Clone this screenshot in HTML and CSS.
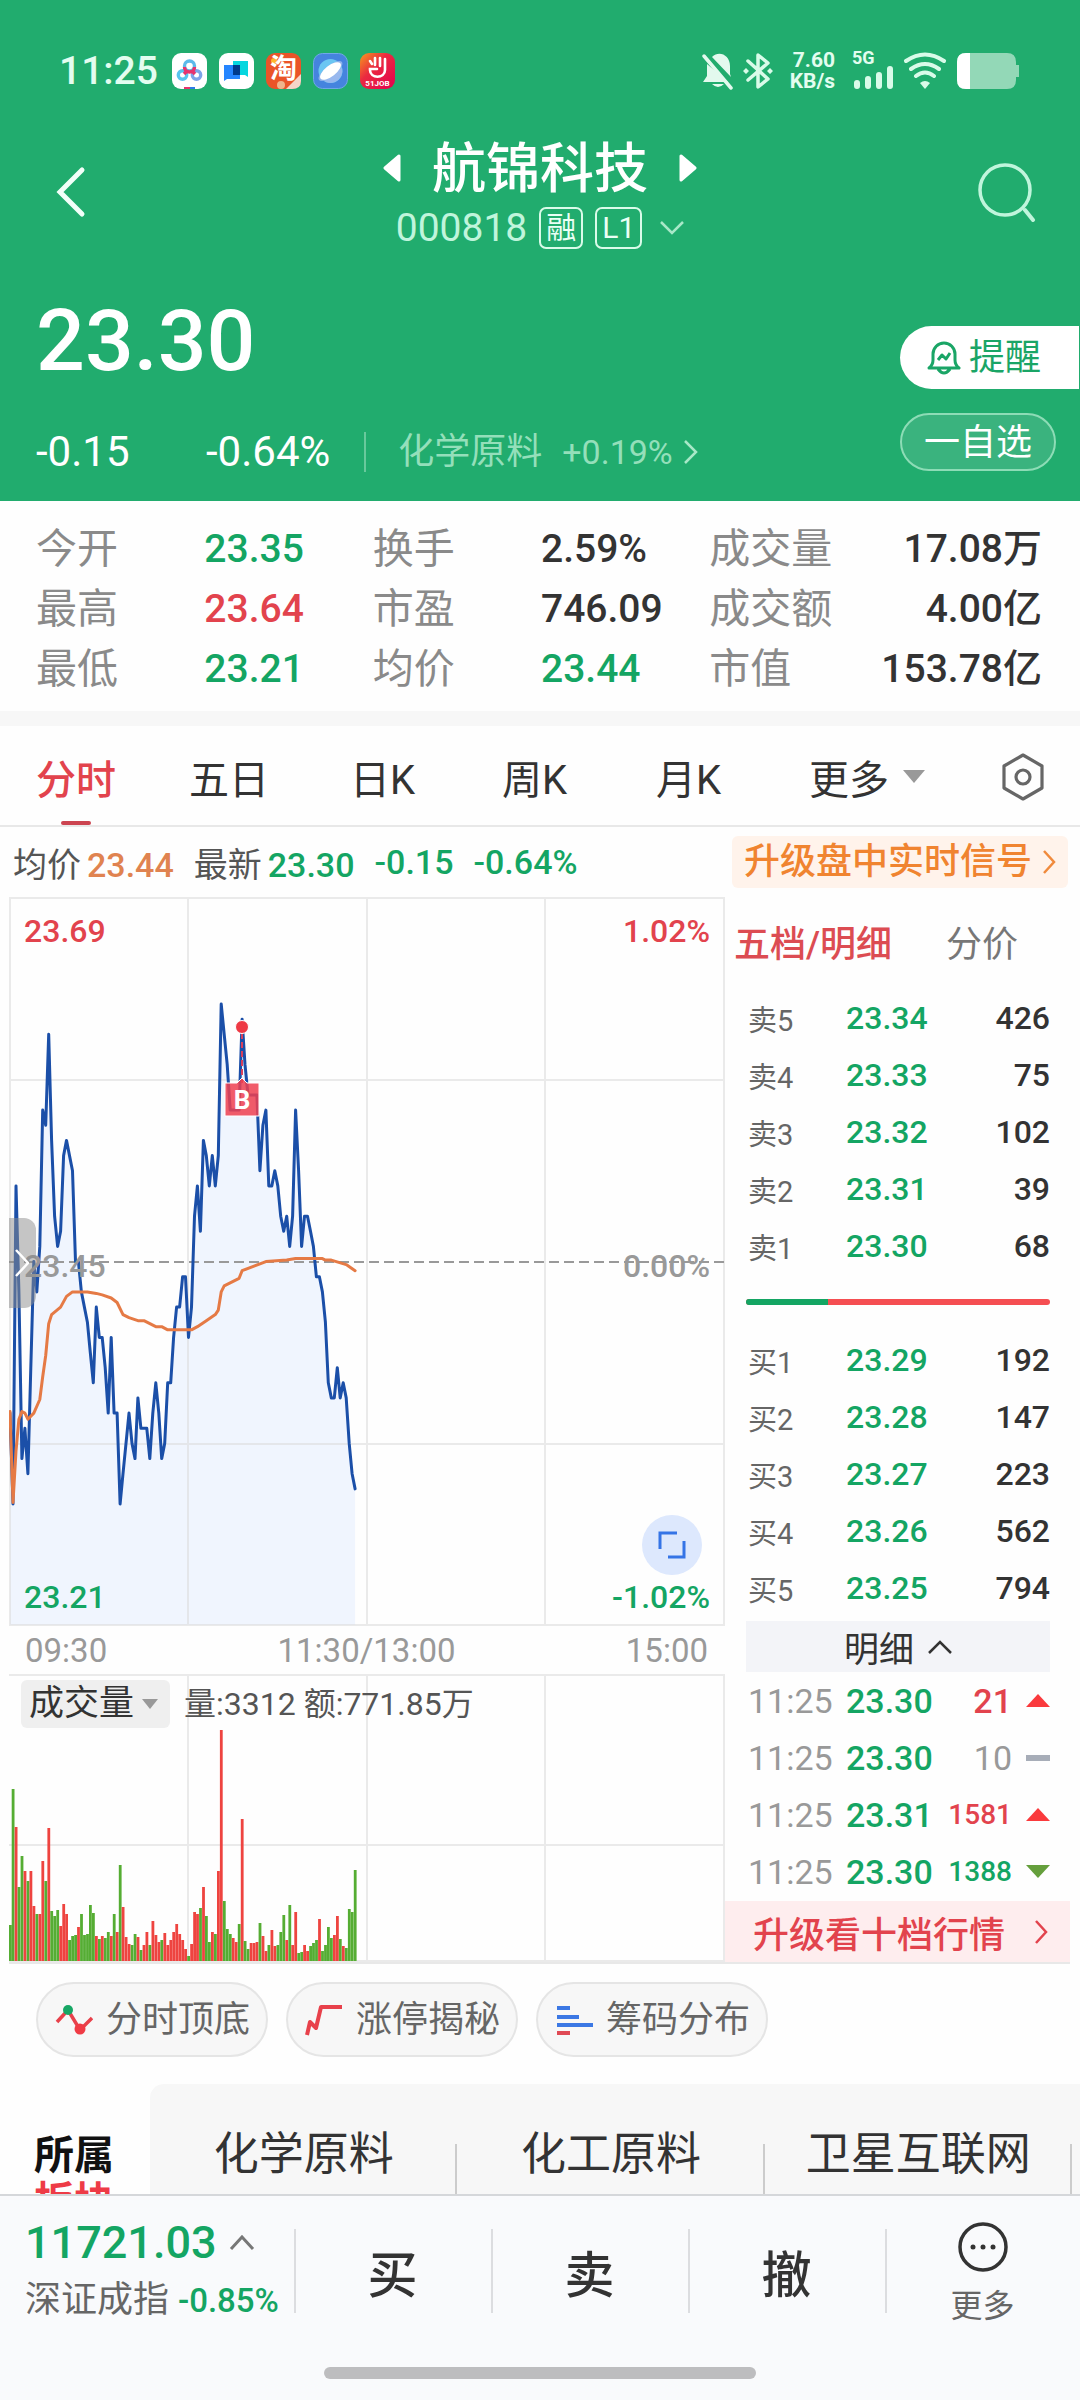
FILE: index.html
```html
<!DOCTYPE html>
<html lang="zh-CN">
<head>
  <meta charset="UTF-8">
  <meta name="viewport" content="width=device-width, initial-scale=1">
  <title>航锦科技 000818</title>
  <link rel="stylesheet" href="styles.css">
</head>
<body>
  <header class="header">
    <div class="status-bar">
      <span class="clock">11:25</span>
      <div class="apps">
        <svg class="app-icon" viewBox="0 0 35 36">
          <rect width="35" height="36" rx="9" fill="#fff"/>
          <g fill="none" stroke-width="3.4">
            <circle cx="10.500" cy="22" r="4.200" stroke="#58c4ee"/>
            <circle cx="24.500" cy="22" r="4.200" stroke="#7da4e8"/>
            <circle cx="17.500" cy="13" r="5" stroke="#5cb9ea"/>
            <path d="M12.500 14a5 5 0 0 0 10 0M14 19l-2 2M21 19l2 2" stroke="#e8336d"/>
          </g>
          <path d="M12 34h6v2h-6z" fill="#e8336d"/><path d="M18 34h5v2h-5z" fill="#2d7be8"/>
        </svg>
        <svg class="app-icon" viewBox="0 0 35 36">
          <rect width="35" height="36" rx="9" fill="#fff"/>
          <path d="M14 8h15v16l-3-2H14z" fill="#06d6df"/>
          <path d="M5 12h16v14H8l-3 2z" fill="#2585ff"/>
          <path d="M14 12h7v10h-7z" fill="#003a8c"/>
        </svg>
        <svg class="app-icon" viewBox="0 0 35 36">
          <rect width="35" height="36" rx="9" fill="#ea5428"/>
          <circle cx="8" cy="8" r="3" fill="#ffb52e"/>
          <path d="M20 36l15-15v7q0 8-9 8z" fill="#f6d5c8"/>
          <circle cx="15" cy="32" r="4" fill="#f0b48c"/>
          <text x="4" y="25" font-size="27" font-weight="700" fill="#fff">淘</text>
        </svg>
        <svg class="app-icon" viewBox="0 0 35 36">
          <rect x=".5" y=".5" width="34" height="35" rx="9" fill="#4584de" stroke="#70a6e8"/>
          <circle cx="17.500" cy="18" r="12" fill="#6bc6f2"/>
          <path d="M7 24a12 12 0 0 0 22-9z" fill="#98b8ee"/>
          <ellipse cx="17.500" cy="18" rx="14.500" ry="5.500" transform="rotate(-38 17.500 18)" fill="#8eb2ea"/>
          <ellipse cx="17.500" cy="18" rx="12.500" ry="5.500" transform="rotate(-38 17.500 18)" fill="#fff"/>
        </svg>
        <svg class="app-icon" viewBox="0 0 35 36">
          <defs>
            <linearGradient id="job" x1="0" y1="0" x2="1" y2="1">
              <stop offset="0" stop-color="#f79a1e"/><stop offset=".4" stop-color="#ea2a40"/><stop offset="1" stop-color="#e3004f"/>
            </linearGradient>
          </defs>
          <rect width="35" height="36" rx="9" fill="url(#job)"/>
          <path d="M25 6v11c0 9-15 9-15 0v-1h7M20 5v8M15 5v7M10 8l2 3" fill="none" stroke="#fff" stroke-width="2.600" stroke-linecap="round"/>
          <text x="17.500" y="33" font-size="8" font-weight="700" text-anchor="middle" fill="#fff">51JOB</text>
        </svg>
      </div>
      <div class="indicators">
        <svg width="32" height="38" viewBox="0 0 32 38">
          <path d="M10 5C17-2 28 3 28 14v8l1 3zM5 12v12l-4 6h25zM10 32h12q-6 6-12 0z" fill="#e3f9ee"/>
          <path d="M2 4l27 32" stroke="#e3f9ee" stroke-width="3.500" stroke-linecap="round"/>
        </svg>
        <svg width="30" height="38" viewBox="0 0 30 38">
          <path d="M5 9l20 18-10 8V3l10 8L5 28" fill="none" stroke="#d9fbe9" stroke-width="3.500" stroke-linejoin="round" stroke-linecap="round"/>
          <path d="M3 16l3 3-3 3-3-3zM27 16l3 3-3 3-3-3z" fill="#d9fbe9"/>
        </svg>
        <span class="net-speed">7.60<br>KB/s</span>
        <div class="signal">
          <span>5G</span>
          <svg width="42" height="26" viewBox="0 0 42 26"><path d="M5 19v3M16 15v7M27 11v11M38 5v17" stroke="#d9fbe9" stroke-width="6" stroke-linecap="round"/></svg>
        </div>
        <svg width="44" height="38" viewBox="0 0 44 38">
          <g fill="none" stroke="#d9fbe9" stroke-width="4" stroke-linecap="round">
            <path d="M3 9q19-13 38 0M8 17q14-10 28 0M13 24q9-7 18 0"/>
          </g>
          <path d="M17 31q5-4 10 0l-5 6z" fill="#d9fbe9"/>
        </svg>
        <svg width="64" height="38" viewBox="0 0 64 38">
          <path d="M10 1h41q9 0 9 9v3h3v12h-3v3q0 9-9 9H10q-9 0-9-9V10q0-9 9-9z" fill="#93d8b7"/>
          <path d="M14 1v36h-4q-9 0-9-9V10q0-9 9-9z" fill="#fff"/>
        </svg>
      </div>
    </div>

    <nav class="title-bar">
      <button class="icon-btn" aria-label="返回">
        <svg width="30" height="52" viewBox="0 0 30 52"><path d="M26 4L4 26l22 22" fill="none" stroke="#f2fff9" stroke-width="5" stroke-linecap="round"/></svg>
      </button>
      <div class="stock">
        <div class="stock-name">
          <button aria-label="上一只"><svg width="18" height="28" viewBox="0 0 18 28"><path d="M16 2v24L2 14z" fill="#fff" stroke="#fff" stroke-width="3" stroke-linejoin="round"/></svg></button>
          <h1>航锦科技</h1>
          <button aria-label="下一只"><svg width="18" height="28" viewBox="0 0 18 28"><path d="M2 2v24l14-12z" fill="#fff" stroke="#fff" stroke-width="3" stroke-linejoin="round"/></svg></button>
        </div>
        <div class="stock-code">
          <span>000818</span>
          <span class="tag">融</span>
          <span class="tag">L1</span>
          <svg width="24" height="14" viewBox="0 0 24 14"><path d="M1 1l11 11L23 1" fill="none" stroke="#a8e8c8" stroke-width="2.500"/></svg>
        </div>
      </div>
      <button class="icon-btn icon-btn-right" aria-label="搜索">
        <svg width="58" height="60" viewBox="0 0 58 60"><circle cx="27" cy="28" r="25" fill="none" stroke="#c0f5dc" stroke-width="3.500"/><path d="M47 48l8 10" stroke="#c0f5dc" stroke-width="4" stroke-linecap="round"/></svg>
      </button>
    </nav>

    <section class="quote">
      <div class="quote-main">
        <div class="price">23.30</div>
        <div class="change">
          <span class="change-value">-0.15</span>
          <span class="change-rate">-0.64%</span>
          <a class="industry" href="#industry">化学原料 <span class="industry-rate">+0.19%</span>
            <svg width="16" height="26" viewBox="0 0 16 26"><path d="M2 2l11 11L2 24" fill="none" stroke="#a8e8c8" stroke-width="2.500"/></svg>
          </a>
        </div>
      </div>
      <div class="quote-actions">
        <button class="remind">
          <svg width="34" height="36" viewBox="0 0 34 36"><g fill="none" stroke="#1aa566" stroke-width="3" stroke-linejoin="round"><path d="M2 28q4-3 4-8v-6a11 11 0 0 1 22 0v6q0 5 4 8zM11 29q6 8 12 0M11 20l4-5 4 4 4-6"/></g></svg>
          提醒
        </button>
        <button class="favorite">一自选</button>
      </div>
    </section>
  </header>

  <main class="content">
    <dl class="stats">
      <dt>今开</dt><dd class="down">23.35</dd><dt>换手</dt><dd>2.59%</dd><dt>成交量</dt><dd class="end">17.08万</dd>
      <dt>最高</dt><dd class="up">23.64</dd><dt>市盈</dt><dd>746.09</dd><dt>成交额</dt><dd class="end">4.00亿</dd>
      <dt>最低</dt><dd class="down">23.21</dd><dt>均价</dt><dd class="down">23.44</dd><dt>市值</dt><dd class="end">153.78亿</dd>
    </dl>

    <nav class="tabs">
      <button class="active">分时</button>
      <button>五日</button>
      <button>日K</button>
      <button>周K</button>
      <button>月K</button>
      <button>更多<i class="caret"></i></button>
      <button aria-label="设置">
        <svg width="42" height="48" viewBox="0 0 42 48"><g fill="none" stroke="#666" stroke-width="3.200" stroke-linejoin="round"><path d="M21 2l19 11v22L21 46 2 35V13z"/><circle cx="21" cy="24" r="7"/></g></svg>
      </button>
    </nav>

    <div class="summary">
      <span>均价<b class="avg">23.44</b></span>
      <span>最新<b class="down">23.30</b></span>
      <b class="down">-0.15</b>
      <b class="down">-0.64%</b>
      <a class="upgrade" href="#signal">升级盘中实时信号
        <svg width="14" height="26" viewBox="0 0 14 26"><path d="M2 2l10 11L2 24" fill="none" stroke="#f08a3c" stroke-width="2.500"/></svg>
      </a>
    </div>

    <div class="market">
      <div class="charts">
        <div class="price-chart">
          <svg viewBox="0 0 716 729">
            <path id="area" fill="#f0f5fe"/>
            <path class="grid-line" d="M1 1h714v727H1zM179 1v727M358 1v727M536 1v727M0 183h716M0 547h716"/>
            <path d="M0 365h716" stroke="#999" stroke-width="2" stroke-dasharray="10 5"/>
            <polyline id="line" fill="none" stroke="#1b4fa8" stroke-width="3" stroke-linejoin="round" stroke-linecap="round"/>
            <polyline id="average" fill="none" stroke="#e57a45" stroke-width="3" stroke-linejoin="round" stroke-linecap="round"/>
            <!-- buy marker -->
            <path d="M233 136v50" stroke="#d8405c" stroke-width="2" stroke-dasharray="6 3"/>
            <circle cx="233" cy="130" r="6.500" fill="#ee3944" stroke="#fff"/>
            <path d="M216 186h12l5-5 5 5h12v33h-34z" fill="#ee3f50" fill-opacity=".85" stroke="#fff"/>
            <text x="233" y="212" class="marker-text">B</text>
            <text class="up" x="15" y="45">23.69</text>
            <text class="up end" x="701" y="45">1.02%</text>
            <text class="flat" x="15" y="380">23.45</text>
            <text class="flat end" x="701" y="380">0.00%</text>
            <text class="down" x="15" y="711">23.21</text>
            <text class="down end" x="701" y="711">-1.02%</text>
          </svg>
          <button class="drawer" aria-label="展开侧栏">
            <svg width="14" height="30" viewBox="0 0 14 30"><path d="M1 2l12 13L1 28" fill="none" stroke="#fff" stroke-width="2.500"/></svg>
          </button>
          <button class="expand" aria-label="全屏">
            <svg width="28" height="28" viewBox="0 0 28 28"><path d="M2 18V2h17M26 10v16H10" fill="none" stroke="#3574e6" stroke-width="3"/></svg>
          </button>
        </div>
        <div class="time-axis"><span>09:30</span><span>11:30/13:00</span><span>15:00</span></div>
        <div class="volume-chart">
          <svg viewBox="0 0 716 288">
            <path class="grid-line" d="M0 1h715v286H0M179 1v286M358 1v286M536 1v286M0 171h716"/>
            <g id="volume"></g>
          </svg>
          <div class="volume-head">
            <span class="select-wrap">
              <select aria-label="副图指标"><option>成交量</option></select>
              <i class="caret"></i>
            </span>
            <span>量:3312 额:771.85万</span>
          </div>
        </div>
      </div>

      <aside class="depth">
        <div class="depth-tabs">
          <button class="active">五档/明细</button>
          <button>分价</button>
        </div>
        <table class="orders">
          <tr><th>卖5</th><td class="down">23.34</td><td>426</td></tr>
          <tr><th>卖4</th><td class="down">23.33</td><td>75</td></tr>
          <tr><th>卖3</th><td class="down">23.32</td><td>102</td></tr>
          <tr><th>卖2</th><td class="down">23.31</td><td>39</td></tr>
          <tr><th>卖1</th><td class="down">23.30</td><td>68</td></tr>
        </table>
        <div class="ratio"><div class="ratio-sell" style="width: 27%"></div></div>
        <table class="orders">
          <tr><th>买1</th><td class="down">23.29</td><td>192</td></tr>
          <tr><th>买2</th><td class="down">23.28</td><td>147</td></tr>
          <tr><th>买3</th><td class="down">23.27</td><td>223</td></tr>
          <tr><th>买4</th><td class="down">23.26</td><td>562</td></tr>
          <tr><th>买5</th><td class="down">23.25</td><td>794</td></tr>
        </table>
        <button class="detail-toggle">明细
          <svg width="24" height="14" viewBox="0 0 24 14"><path d="M1 13L12 2l11 11" fill="none" stroke="#333" stroke-width="2.500"/></svg>
        </button>
        <table class="ticks">
          <tr><th>11:25</th><td class="down">23.30</td><td class="up">21</td><td><i class="mark mark-up"></i></td></tr>
          <tr><th>11:25</th><td class="down">23.30</td><td class="flat">10</td><td><i class="mark mark-flat"></i></td></tr>
          <tr><th>11:25</th><td class="down">23.31</td><td class="up small">1581</td><td><i class="mark mark-up"></i></td></tr>
          <tr><th>11:25</th><td class="down">23.30</td><td class="down small">1388</td><td><i class="mark mark-down"></i></td></tr>
        </table>
        <a class="level2" href="#level2">升级看十档行情
          <svg width="14" height="26" viewBox="0 0 14 26"><path d="M2 2l10 11L2 24" fill="none" stroke="#e2434d" stroke-width="2.500"/></svg>
        </a>
      </aside>
    </div>

    <div class="chips">
      <button>
        <svg width="38" height="32" viewBox="0 0 38 32"><path d="M2 18L13 6l12 20 12-12" fill="none" stroke="#e8414b" stroke-width="3.500"/><circle cx="13" cy="6" r="5" fill="#17a765"/><circle cx="25" cy="25" r="5.500" fill="#f03b45"/></svg>
        分时顶底
      </button>
      <button>
        <svg width="38" height="32" viewBox="0 0 38 32"><path d="M2 31l3-13 6 6 5-21h21" fill="none" stroke="#e8414b" stroke-width="4" stroke-linejoin="round"/></svg>
        涨停揭秘
      </button>
      <button>
        <svg width="38" height="32" viewBox="0 0 38 32"><path d="M2 4h13M2 13h22M2 21h36" stroke="#3c78e4" stroke-width="4"/><path d="M2 29h13" stroke="#e04a55" stroke-width="4"/></svg>
        筹码分布
      </button>
    </div>

    <section class="sectors">
      <h2>所属<br><span>板块</span></h2>
      <ul>
        <li><a href="#s1">化学原料</a></li>
        <li><a href="#s2">化工原料</a></li>
        <li><a href="#s3">卫星互联网</a></li>
      </ul>
    </section>
  </main>

  <footer class="bottom-bar">
    <div class="actions">
      <a class="index" href="#index">
        <span class="index-value">11721.03
          <svg width="26" height="16" viewBox="0 0 26 16"><path d="M2 14L13 2l11 12" fill="none" stroke="#777" stroke-width="3"/></svg>
        </span>
        <span class="index-name">深证成指 <span class="index-rate">-0.85%</span></span>
      </a>
      <button>买</button>
      <button>卖</button>
      <button>撤</button>
      <button class="more">
        <svg width="50" height="50" viewBox="0 0 50 50"><circle cx="25" cy="25" r="23" fill="none" stroke="#333" stroke-width="3.500"/><g fill="#333"><circle cx="15" cy="25" r="2.500"/><circle cx="25" cy="25" r="2.500"/><circle cx="35" cy="25" r="2.500"/></g></svg>
        更多
      </button>
    </div>
    <div class="home-indicator"></div>
  </footer>

  <script src="script.js"></script>
</body>
</html>
```
FILE: styles.css
```css
:root {
  --green: #14a563;
  --red: #e2434d;
  --header: #21ac6e;
  --text: #333;
  --muted: #8a8a8a;
}

* {
  margin: 0;
  padding: 0;
  box-sizing: border-box;
}

body {
  height: 100vh;
  display: flex;
  flex-direction: column;
  overflow: hidden;
  background: #fefefe;
  color: var(--text);
  font-family: Roboto, "Noto Sans CJK SC", sans-serif;
}

button,
select {
  border: 0;
  background: none;
  color: inherit;
  font: inherit;
}

a {
  color: inherit;
  text-decoration: none;
}

svg {
  display: block;
  flex-shrink: 0;
}

.up { color: var(--red); fill: var(--red); }
.down { color: var(--green); fill: var(--green); }
.flat { color: #999; fill: #999; }

.caret {
  border: 11px solid transparent;
  border-top: 13px solid #999;
  border-bottom: 0;
}

/* Header */
.header {
  background: var(--header);
  color: #fff;
}

.status-bar {
  display: flex;
  align-items: center;
  padding: 50px 60px 46px 59px;
  line-height: 42px;
  color: #e3fdf0;
}

.clock {
  font-size: 39px;
  font-weight: 500;
  margin-right: 14px;
}

.apps {
  display: flex;
  gap: 12px;
}

.app-icon {
  width: 35px;
  height: 36px;
}

.indicators {
  display: flex;
  align-items: center;
  gap: 9px;
  margin-left: auto;
}

.net-speed {
  margin: 0 8px;
  font-size: 21px;
  font-weight: 700;
  line-height: 21px;
  text-align: right;
}

.signal {
  display: flex;
  flex-direction: column;
  font-size: 18px;
  font-weight: 700;
  line-height: 12px;
}

.title-bar {
  display: grid;
  grid-template-columns: 1fr auto 1fr;
  align-items: start;
  padding: 0 44px 0 56px;
}

.icon-btn {
  height: 108px;
  justify-self: start;
}

.icon-btn-right {
  justify-self: end;
}

.stock {
  margin-right: 12px;
}

.stock-name,
.stock-code {
  display: flex;
  align-items: center;
  justify-content: center;
  height: 60px;
}

.stock-name {
  gap: 31px;
}

h1 {
  font-size: 54px;
  font-weight: 500;
  line-height: 60px;
  padding-top: 4px;
}

.stock-code {
  gap: 12px;
  font-size: 39px;
  color: #c0f5dc;
}

.stock-code svg {
  margin-left: 6px;
}

.tag {
  min-width: 44px;
  padding: 0 5px;
  border: 2px solid #d9fbe9;
  border-radius: 7px;
  font-size: 30px;
  line-height: 38px;
  text-align: center;
  color: #eafff5;
}

.quote {
  display: flex;
  justify-content: space-between;
  padding: 33px 0 19px 36px;
}

.price {
  font-size: 86px;
  font-weight: 500;
  line-height: 100px;
  margin-bottom: 31px;
}

.change {
  display: flex;
  align-items: center;
  font-size: 42px;
  line-height: 60px;
}

.change-value {
  width: 170px;
}

.industry {
  display: flex;
  align-items: center;
  gap: 20px;
  margin-left: 34px;
  padding-left: 32px;
  border-left: 2px solid #68c99c;
  font-size: 36px;
  line-height: 40px;
  color: #94dfba;
}

.industry-rate {
  font-size: 34px;
}

.industry svg {
  margin-left: -10px;
}

.quote-actions {
  display: flex;
  flex-direction: column;
  align-items: flex-start;
  gap: 24px;
  padding-top: 35px;
  font-size: 36px;
}

.remind {
  display: flex;
  align-items: center;
  gap: 8px;
  height: 63px;
  padding: 0 38px 0 27px;
  border-radius: 32px 0 0 32px;
  background: #fff;
  color: #1aa566;
  line-height: 60px;
}

.favorite {
  height: 58px;
  margin-right: 24px;
  padding: 2px 22px 0;
  border: 2px solid #8ddcb6;
  border-radius: 29px;
  background: #3ab37e;
  line-height: 52px;
}

/* Key figures */
.content {
  flex: 1;
  min-height: 0;
  overflow: hidden;
}

.stats {
  display: grid;
  grid-template-columns: 168fr 168fr 168fr 168fr 124fr 208fr;
  padding: 18px 38px 12px 36px;
  border-bottom: 15px solid #f7f7f7;
  line-height: 60px;
}

.stats dt {
  font-size: 41px;
  color: var(--muted);
  white-space: nowrap;
}

.stats dd {
  font-size: 39px;
  font-weight: 500;
}

.stats .end {
  text-align: right;
}

.tabs {
  display: grid;
  grid-template-columns: 153fr 161fr 152fr 154fr 153fr 193fr 42fr;
  padding: 0 36px;
  border-bottom: 2px solid #e8e8e8;
  font-size: 40px;
}

.tabs button {
  position: relative;
  display: flex;
  align-items: center;
  gap: 14px;
  height: 99px;
  padding-top: 2px;
}

.tabs .active {
  color: var(--red);
  font-weight: 500;
}

.tabs .active::after {
  content: "";
  position: absolute;
  left: 25px;
  bottom: 0;
  width: 30px;
  height: 4px;
  border-radius: 2px;
  background: #cc4450;
}

.summary {
  display: flex;
  align-items: center;
  gap: 20px;
  height: 70px;
  padding: 0 12px 0 13px;
  font-size: 34px;
  color: #555;
}

.summary b {
  font-weight: 500;
}

.summary span b {
  margin-left: 6px;
}

.summary .avg {
  color: #e08350;
}

.upgrade {
  display: flex;
  align-items: center;
  gap: 10px;
  margin-left: auto;
  padding: 0 12px;
  border-radius: 6px;
  background: #fff3eb;
  color: #f08430;
  font-size: 36px;
  font-weight: 500;
  line-height: 52px;
}

/* Charts and order book */
.market {
  display: grid;
  grid-template-columns: 716fr 345fr;
  margin: 0 10px 0 9px;
  border-bottom: 2px solid #e8e8e8;
}

.price-chart,
.volume-chart {
  position: relative;
}

.price-chart svg text {
  font-size: 32px;
  font-weight: 500;
}

.price-chart svg .end {
  text-anchor: end;
}

.price-chart svg .marker-text {
  fill: #fff;
  font-size: 26px;
  font-weight: 700;
  text-anchor: middle;
}

.grid-line {
  fill: none;
  stroke: #dcdcdc;
  stroke-opacity: .6;
  stroke-width: 2;
}

.drawer {
  position: absolute;
  left: 0;
  top: 44%;
  width: 27px;
  height: 90px;
  padding-left: 6px;
  border-radius: 0 12px 12px 0;
  background: rgba(140, 140, 140, .5);
}

.expand {
  position: absolute;
  right: 23px;
  bottom: 51px;
  display: grid;
  place-items: center;
  width: 60px;
  height: 60px;
  border-radius: 50%;
  background: #dde8fd;
}

.time-axis {
  display: flex;
  justify-content: space-between;
  padding: 2px 17px 0 16px;
  font-size: 33px;
  line-height: 46px;
  color: #999;
}

.volume-head {
  position: absolute;
  top: 6px;
  left: 12px;
  display: flex;
  align-items: center;
  gap: 14px;
  font-size: 32px;
  line-height: 48px;
  color: #555;
}

.select-wrap {
  display: flex;
  align-items: center;
  padding: 0 12px 0 8px;
  border-radius: 6px;
  background: #efefef;
}

.select-wrap select {
  width: 113px;
  height: 48px;
  appearance: none;
  font-size: 35px;
  color: var(--text);
}

.select-wrap .caret {
  border-width: 10px 8px 0;
}

.depth-tabs {
  display: flex;
  justify-content: space-between;
  padding: 20px 52px 16px 9px;
  font-size: 36px;
  line-height: 56px;
  color: #777;
}

.depth-tabs .active {
  color: #dc4c52;
  font-weight: 500;
}

.orders,
.ticks {
  width: calc(100% - 41px);
  margin-left: 21px;
  border-collapse: collapse;
  table-layout: fixed;
}

.orders th,
.ticks th {
  width: 100px;
  padding-left: 2px;
  text-align: left;
  font-weight: 400;
  color: #666;
}

.orders tr,
.ticks tr {
  height: 57px;
}

.orders th {
  font-size: 29px;
}

.orders td {
  font-size: 32px;
  font-weight: 500;
}

.orders td:last-child {
  text-align: right;
}

.ratio {
  display: flex;
  height: 6px;
  margin: 25px 20px 26px 21px;
  border-radius: 3px;
  background: #f54e52;
  overflow: hidden;
}

.ratio-sell {
  background: #14a563;
}

.detail-toggle {
  display: flex;
  align-items: center;
  justify-content: center;
  gap: 14px;
  width: calc(100% - 41px);
  height: 51px;
  margin: 5px 0 0 21px;
  background: #f3f4f8;
  font-size: 35px;
}

.ticks th {
  font-size: 34px;
  color: #999;
}

.ticks td {
  font-size: 34px;
  font-weight: 500;
}

.ticks td.flat {
  font-weight: 400;
}

.ticks td:nth-child(3) {
  width: 76px;
  text-align: right;
}

.ticks td:last-child {
  width: 38px;
}

.ticks td.small {
  font-size: 28px;
}

.mark {
  display: block;
  width: 24px;
  margin-left: auto;
}

.mark-up {
  border: 12px solid transparent;
  border-bottom: 13px solid #fa3a3d;
  border-top: 0;
}

.mark-flat {
  height: 6px;
  background: #a7adb8;
}

.mark-down {
  border: 12px solid transparent;
  border-top: 13px solid #659f3c;
  border-bottom: 0;
}

.level2 {
  display: flex;
  align-items: center;
  justify-content: space-between;
  height: 61px;
  margin-top: 1px;
  padding: 0 22px 0 28px;
  background: #feedee;
  color: var(--red);
  font-size: 36px;
  font-weight: 500;
}

.chips {
  display: flex;
  gap: 18px;
  padding: 18px 36px 27px;
}

.chips button {
  display: flex;
  align-items: center;
  gap: 13px;
  height: 75px;
  padding: 0 16px 0 17px;
  border: 2px solid #e5e5e5;
  border-radius: 38px;
  background: #f7f7f7;
  font-size: 36px;
  line-height: 72px;
  color: #666;
}

.sectors {
  display: flex;
}

.sectors h2 {
  width: 150px;
  padding: 49px 0 0 34px;
  font-size: 40px;
  line-height: 46px;
  color: #111;
}

.sectors h2 span {
  color: #ee3b46;
}

.sectors ul {
  flex: 1;
  display: flex;
  padding: 42px 8px 60px 0;
  border-top-left-radius: 14px;
  background: #f7f7f7;
  list-style: none;
}

.sectors li {
  flex: 1;
  height: 120px;
  font-size: 45px;
  line-height: 58px;
  text-align: center;
  background: linear-gradient(#ccc, #ccc) right 18px / 2px 100% no-repeat;
}

/* Bottom trading bar */
.bottom-bar {
  border-top: 2px solid #d5d7da;
  background: #f9fafc;
  padding-bottom: 21px;
}

.actions {
  display: grid;
  grid-template-columns: 294fr 197fr 197fr 197fr 195fr;
  height: 116px;
  margin: 18px 0 37px;
}

.actions button {
  position: relative;
  font-size: 50px;
  font-weight: 500;
  padding-bottom: 6px;
}

/* short divider on the left of every action */
.actions button::before {
  content: "";
  position: absolute;
  left: 0;
  top: 15px;
  width: 2px;
  height: 84px;
  background: #dcdde0;
}

.index {
  display: flex;
  flex-direction: column;
  padding-left: 25px;
  white-space: nowrap;
}

.index-value {
  display: flex;
  align-items: center;
  gap: 12px;
  font-size: 45px;
  font-weight: 500;
  line-height: 58px;
  color: var(--green);
}

.index-name {
  font-size: 36px;
  line-height: 56px;
  color: #666;
}

.index-rate {
  font-size: 33px;
  font-weight: 500;
  color: var(--green);
}

.actions .more {
  display: flex;
  flex-direction: column;
  align-items: center;
  gap: 6px;
  padding: 8px 0 0;
  font-size: 32px;
  font-weight: 400;
  line-height: 56px;
  color: #666;
}

.home-indicator {
  width: 40%;
  height: 12px;
  margin: 0 auto;
  border-radius: 6px;
  background: #bdbdbf;
}
```
FILE: script.js
```js
// prices are in cents above 23.00, one value per minute
const prices = [
  35, 29, 50, 43, 32, 34, 31, 38, 45, 43, 46, 55, 54, 60, 53, 48, 46, 47, 52, 53,
  52, 51, 45, 45, 43, 42, 41, 39, 37, 42, 40, 40, 38, 35, 40, 35, 35, 29, 31, 33,
  35, 33, 32, 36, 34, 34, 34, 32, 35, 37, 35, 32, 33, 37, 37, 40, 42, 42, 44, 44,
  40, 42, 48, 50, 47, 53, 52, 50, 52, 50, 52, 62, 60, 58, 55, 55, 55, 55, 61, 58,
  56, 56, 56, 56, 51, 54, 55, 50, 50, 51, 50, 48, 47, 48, 46, 48, 55, 51, 46, 48,
  48, 47, 46, 44, 44, 43, 41, 37, 36, 36, 38, 36, 37, 36, 33, 31, 30
]

// [minute, average price]
const averages = [
  [0, 35.1], [1, 29.1], [2, 32.5], [3, 34.6], [4, 35.1], [5, 35], [6, 34.6], [8, 35],
  [10, 35.9], [11, 37.4], [12, 38.8], [13, 40.9], [14, 41.5], [17, 42], [19, 42.7],
  [21, 43], [26, 43], [29, 42.9], [31, 42.8], [34, 42.6], [36, 42.3], [38, 41.5],
  [40, 41.3], [43, 41.1], [45, 41.1], [49, 40.7], [51, 40.7], [53, 40.5], [61, 40.5],
  [63, 40.7], [66, 41.1], [69, 41.5], [70, 41.8], [71, 43], [72, 43.4], [77, 43.9],
  [78, 44.4], [82, 44.7], [86, 45], [93, 45.1], [96, 45.2], [105, 45.2], [106, 45.1],
  [108, 45.1], [113, 44.8], [116, 44.4]
]

// positive = rising minute, negative = falling minute
const volumes = [
  -36, -172, 134, -74, -105, 90, -80, 90, 55, -47, 47, 100, -80, 133, -50, -45, -51, 35, 57, 47,
  -21, -25, -26, 34, -47, -26, -27, -56, -48, 25, -22, 25, -23, -29, 25, -47, 29, -96, 54, 24,
  17, -16, -27, 24, -11, 16, 29, -16, 40, 26, 19, -21, 28, 16, 21, 29, 37, 27, 21, 12,
  -5, 17, 49, 47, -53, 74, -45, -19, 29, -27, 90, 231, -60, -32, -27, 23, 19, -37, 142, -20,
  -12, 18, 18, 19, -38, 25, 10, -16, 31, 15, -16, -29, -46, 21, -56, 16, 49, -8, -9, 16,
  10, -15, -18, -21, 42, -10, -16, -34, -23, 26, 45, -22, 15, -13, -52, -49, -91
]

const x = minute => (1 + minute * 2.975).toFixed(1)
const y = price => (1 + (69 - price) * 15.15).toFixed(1)

const points = prices.map((p, i) => `${x(i)},${y(p)}`)
document.getElementById('line').setAttribute('points', points.join(' '))
document.getElementById('area').setAttribute('d', `M1,728L${points.join('L')}V728Z`)
document.getElementById('average').setAttribute('points', averages.map(([m, p]) => `${x(m)},${y(p)}`).join(' '))

document.getElementById('volume').innerHTML = volumes.map((v, i) => {
  const h = Math.abs(v)
  const color = v > 0 ? '#ee4440' : '#55ad33'
  return `<rect x="${Math.max(0, x(i) - 1.3)}" y="${287 - h}" width="2.8" height="${h}" fill="${color}"/>`
}).join('')
```
